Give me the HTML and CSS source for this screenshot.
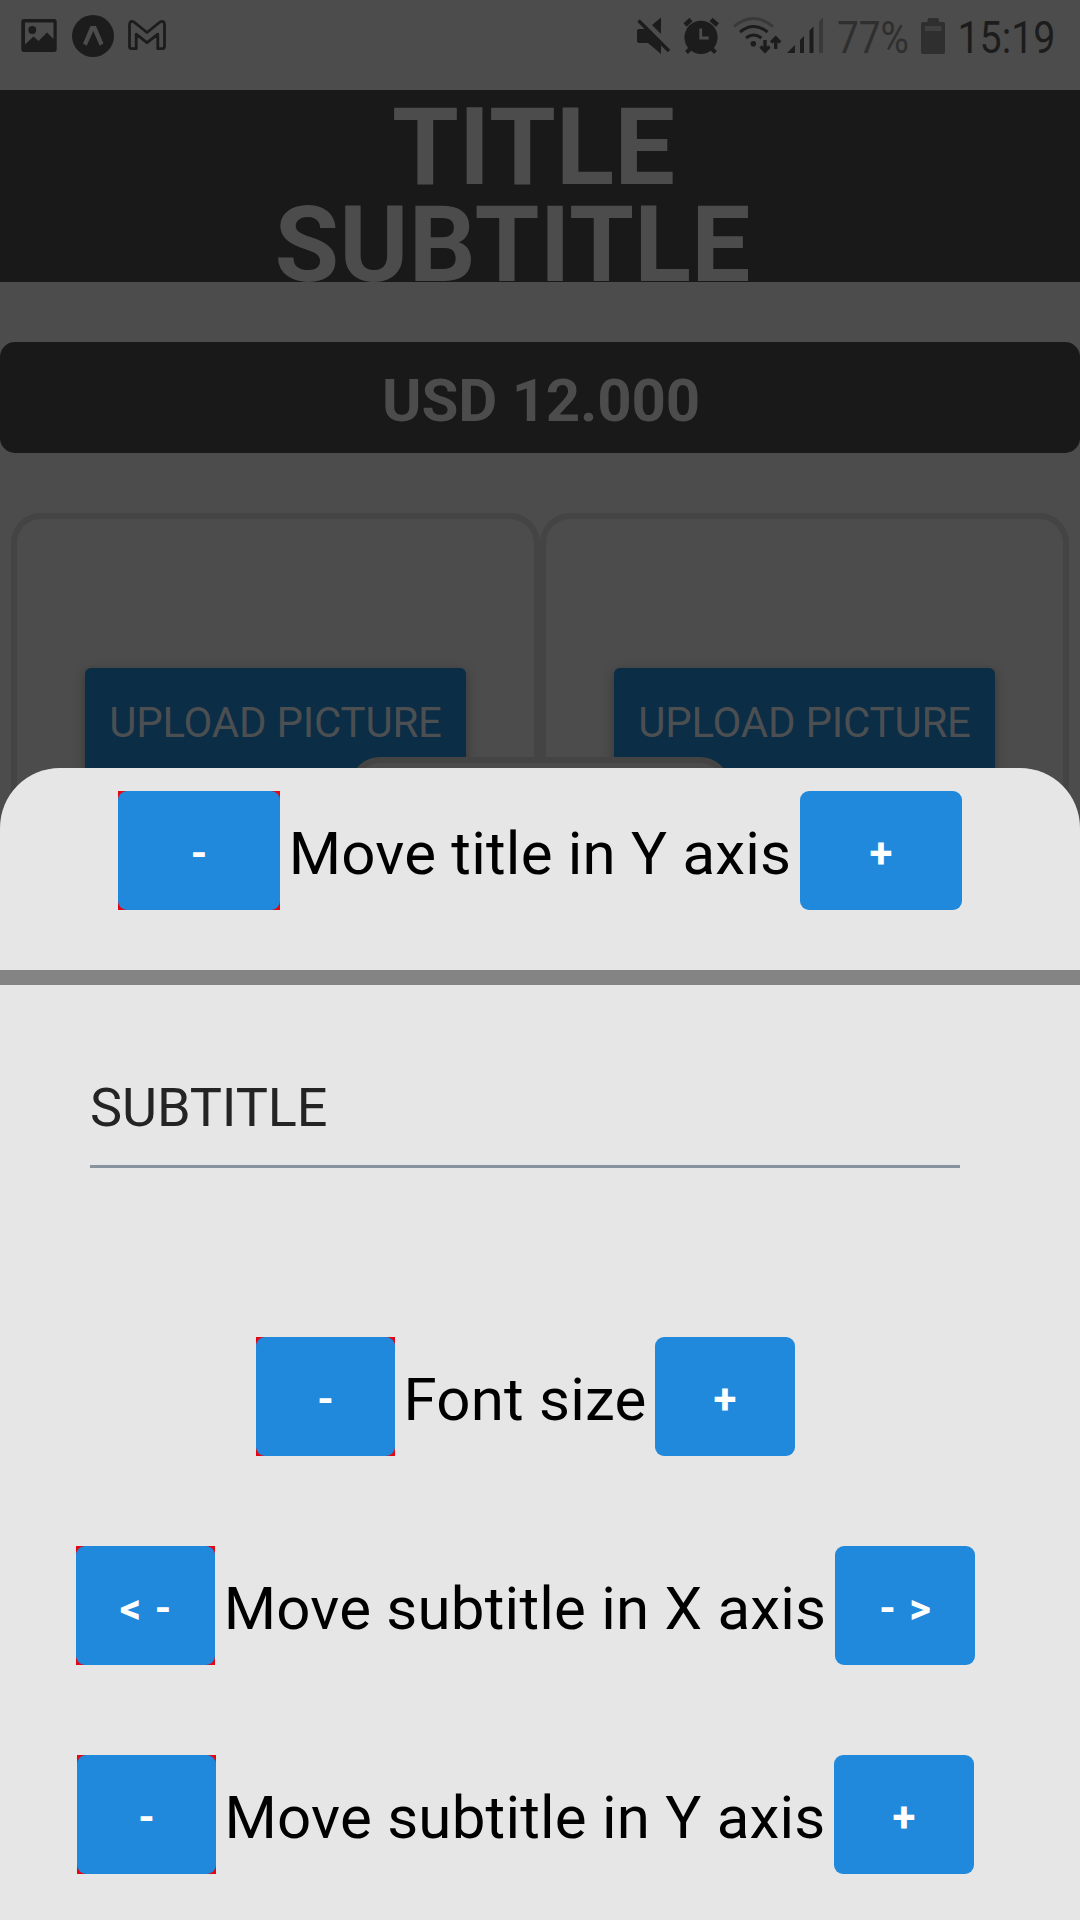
FILE: index.html
```html
<!DOCTYPE html>
<html lang="en">
<head>
<meta charset="utf-8">
<title>Editor</title>
<link rel="stylesheet" href="styles.css">
</head>
<body>
<div class="screen">
  <div class="status">
    <div class="status-group">
      <svg width="70" height="72" viewBox="0 0 70 72"><path fill-rule="evenodd" d="M24 19h30q2.700 0 2.700 2.700v27.600q0 2.700-2.700 2.700h-30q-2.700 0-2.700-2.700v-27.600q0-2.700 2.700-2.700zM25 22.500v22l8.500-8 5 4.500 8.500-8.500 6.500 6.500v-16.500z"/><circle cx="32.300" cy="30" r="3.900"/></svg>
      <svg width="48" height="72" viewBox="70 0 48 72"><circle cx="93" cy="36" r="21"/><path class="cut" d="M90.500 26h5.500l7.500 17.500-3.800 2.300-6.400-14.800-6.600 14.800-3.700-2.300z"/></svg>
      <svg width="52" height="72" viewBox="118 0 52 72"><path class="line" stroke-width="2.800" stroke-linejoin="round" d="M129.500 25q0-5 4.500-3l13 10.500 13-10.500q4.500-2 4.500 3v21.500q0 2.200-2.200 2.200h-4.500v-14.500l-10.800 8.500-10.800-8.500v14.500h-4.500q-2.200 0-2.200-2.200z"/></svg>
    </div>
    <div class="status-group">
      <svg width="46" height="72" viewBox="630 0 46 72"><path d="M637 31q0-2 2-2h8l14 14v11l-13-11h-9q-2 0-2-2zM652 25l9-7.500v16.500z"/><path class="line" stroke-width="3.400" d="M638.500 20.500l30.500 30.500"/></svg>
      <svg width="50" height="72" viewBox="676 0 50 72"><circle cx="701" cy="37.300" r="16.600"/><path class="line" stroke-width="4.500" d="M685 25l6-5.500M711 19.500l6.500 5.500"/><path class="line" stroke-width="4" d="M691 48l-4.500 4.500M711 48l4.500 4.500"/><path class="cut-line" stroke-width="2.800" d="M700.700 28.500v9.500h8"/></svg>
      <svg width="58" height="72" viewBox="726 0 58 72"><g class="line" stroke-width="3"><path class="faint-line" d="M734 26.500q19.500-16 39 0"/><path d="M740 32q13.500-11 27.500 0M746 38q7.500-6 15.500 0"/><path stroke-width="3.400" d="M765 40v11M760.500 46.500l4.500 4.500 4.500-4.500M775.700 49v-11M771.200 42.500l4.500-4.500 4.500 4.500"/></g><circle cx="753.300" cy="43.700" r="2.800"/></svg>
      <svg width="46" height="72" viewBox="784 0 46 72"><path d="M787 53l8-8v8zM800 53v-13l4-4v17zM809.500 53v-22.500l4-4v26.500z"/><path class="faint" d="M819 53v-31.500l4-4v35.500z"/></svg>
      <svg width="84" height="72" viewBox="830 0 84 72"><text class="dim" x="837" y="53" textLength="72" lengthAdjust="spacingAndGlyphs">77%</text></svg>
      <svg width="38" height="72" viewBox="914 0 38 72"><path class="dim" fill-rule="evenodd" d="M923 22h4.500v-2q0-2 2-2h7.500q2 0 2 2v2h4q2 0 2 2v28q0 2-2 2h-20q-2 0-2-2v-28q0-2 2-2z"/><path class="level" d="M925 26h16.500v5h-16.500z"/></svg>
      <svg width="128" height="72" viewBox="952 0 128 72"><text x="957.500" y="53" textLength="98" lengthAdjust="spacingAndGlyphs">15:19</text></svg>
    </div>
  </div>
  <header class="banner">
    <div class="title">TITLE</div>
    <div class="subtitle">SUBTITLE</div>
  </header>
  <div class="price">USD 12.000</div>
  <div class="cards">
    <div class="card"><div class="upload">UPLOAD PICTURE</div></div>
    <div class="card"><div class="upload">UPLOAD PICTURE</div></div>
    <div class="middle-card"></div>
  </div>
  <section class="sheet">
    <div class="row title-row">
      <div class="minus"><button class="btn">-</button></div>
      <span class="label">Move title in Y axis</span>
      <button class="btn">+</button>
    </div>
    <div class="divider"></div>
    <div class="form">
      <div class="field">SUBTITLE</div>
      <div class="row size-row">
        <div class="minus"><button class="btn">-</button></div>
        <span class="label">Font size</span>
        <button class="btn">+</button>
      </div>
      <div class="row x-row">
        <div class="minus"><button class="btn">&lt; -</button></div>
        <span class="label">Move subtitle in X axis</span>
        <button class="btn">- &gt;</button>
      </div>
      <div class="row y-row">
        <div class="minus"><button class="btn">-</button></div>
        <span class="label">Move subtitle in Y axis</span>
        <button class="btn">+</button>
      </div>
    </div>
  </section>
</div>
</body>
</html>
```
FILE: styles.css
```css
* { box-sizing: border-box; }
body { margin: 0; font-family: Roboto, sans-serif; }
.screen {
  position: relative;
  width: 1080px;
  height: 1920px;
  overflow: hidden;
  background: #4c4c4c;
}

/* Status bar */
.status { display: flex; justify-content: space-between; height: 90px; }
.status-group { display: flex; }
.status svg { display: block; fill: #1c1c1c; font-size: 44.5px; }
.status .line { fill: none; stroke: #1c1c1c; }
.status .faint-line { stroke: #393939; }
.status .faint { fill: #393939; }
.status .dim { fill: #2f2f2f; }
.status .level { fill: #404040; }
.status .cut { fill: #4c4c4c; }
.status .cut-line { fill: none; stroke: #4c4c4c; }

/* Dimmed page */
.banner {
  height: 192px;
  overflow: hidden;
  background: #191919;
  color: #4c4c4c;
  font-weight: 700;
  text-align: center;
}
.title { padding-right: 13px; font-size: 108px; line-height: 114px; }
.subtitle {
  padding-right: 55px;
  font-size: 105px;
  letter-spacing: 0.15px;
  line-height: 84px;
}
.price {
  height: 111px;
  margin-top: 60px;
  padding-left: 2px;
  border-radius: 15px;
  background: #191919;
  color: #4c4c4c;
  font-size: 60px;
  font-weight: 700;
  letter-spacing: -0.2px;
  line-height: 118px;
  text-align: center;
}
.cards {
  position: relative;
  display: flex;
  margin-top: 60px;
  padding: 0 11px;
}
.card {
  flex: 1;
  height: 600px;
  padding: 149px 68px 0;
  border: 6px solid #444;
  border-radius: 30px;
}
.upload {
  width: 381px;
  height: 120px;
  border-radius: 6px;
  background: #0b2d46;
  box-shadow: 0 3px 12px rgba(0, 0, 0, 0.3);
  color: #4c4f51;
  font-size: 42px;
  letter-spacing: -0.22px;
  line-height: 110px;
  text-align: center;
}
.middle-card {
  position: absolute;
  top: 244px;
  left: 350px;
  width: 380px;
  height: 200px;
  border: 6px solid #444;
  border-radius: 30px;
  background: #4c4c4c;
}

/* Bottom sheet */
.sheet {
  position: absolute;
  inset: 768px 0 0;
  border-radius: 60px 60px 0 0;
  background: #e6e6e6;
}
.row { display: flex; justify-content: center; height: 119px; }
.minus { background: #e30613; }
.btn {
  display: block;
  width: 140px;
  height: 119px;
  padding: 7px 0 0;
  border: 0;
  border-radius: 9px;
  background: #2089dc;
  color: #fff;
  font: 700 42px/50px Roboto, sans-serif;
  word-spacing: 3px;
}
.label {
  width: 620px;
  color: #000;
  font-size: 60px;
  letter-spacing: 0.22px;
  line-height: 125px;
  text-align: center;
  white-space: nowrap;
}
.title-row { padding-top: 23px; height: 202px; }
.title-row .minus { height: 119px; }
.title-row .btn { width: 162px; }
.title-row .label { width: 520px; }
.divider { height: 15px; background: #848484; }
.form { width: 1050px; padding-left: 1px; }
.field {
  width: 870px;
  height: 183px;
  margin: 0 0 169px 89px;
  padding-top: 81px;
  border-bottom: 3px solid #86939e;
  color: #242424;
  font-size: 54px;
  letter-spacing: -0.1px;
  line-height: 84px;
}
.size-row .label { width: 260px; }
.x-row, .y-row { margin-top: 90px; }
.y-row .label { width: 618px; }
.form .minus .btn { width: 139px; }
```
